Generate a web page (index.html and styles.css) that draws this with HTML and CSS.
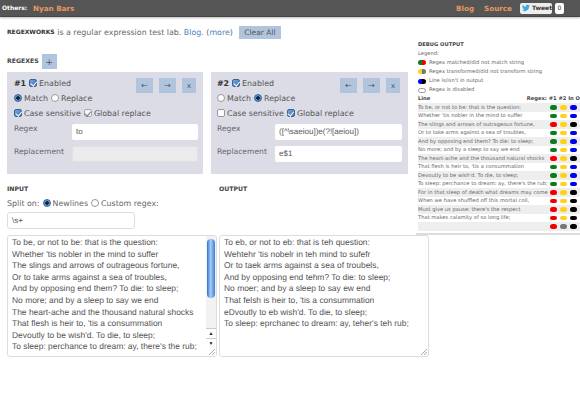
FILE: index.html
```html
<!DOCTYPE html>
<html lang="en">
<head>
  <meta charset="UTF-8">
  <title>Regexworks</title>
  <link rel="stylesheet" href="styles.css">
</head>
<body>
  <header class="topbar">
    <span class="others">Others:</span>
    <a class="toplink nyan">Nyan Bars</a>
    <span class="spacer"></span>
    <a class="toplink">Blog</a>
    <a class="toplink source">Source</a>
    <span class="tweet">
      <svg width="10" height="8" viewBox="0 0 24 20"><path fill="#3fa9e0" d="M24 2.4a10 10 0 0 1-2.8.8A5 5 0 0 0 23.3.5a10 10 0 0 1-3.100 1.200 4.900 4.900 0 0 0-8.400 4.500A14 14 0 0 1 1.700.9a4.900 4.900 0 0 0 1.500 6.600 5 5 0 0 1-2.200-.6 4.900 4.900 0 0 0 3.900 4.900 5 5 0 0 1-2.200.1 4.900 4.900 0 0 0 4.600 3.400A9.900 9.900 0 0 1 0 17.400 14 14 0 0 0 21.500 5q1.500-1.100 2.500-2.600z"/></svg>
      Tweet
    </span>
    <span class="count">0</span>
  </header>

  <div class="main">
    <div class="left">
      <p class="intro"><b class="brand">REGEXWORKS</b> is a regular expression test lab. <a>Blog.</a> (<a>more</a>)<button class="btn clear">Clear All</button></p>
      <div class="regex-head"><h3>REGEXES</h3><button class="btn add">+</button></div>

      <div class="panels">
        <section class="panel">
          <div class="panel-top">
            <div>
              <div class="row"><b>#1</b><i class="check on"></i>Enabled</div>
              <div class="row"><i class="radio on"></i>Match<i class="radio"></i>Replace</div>
            </div>
            <div class="tools"><button class="btn move">←</button><button class="btn move">→</button><button class="btn del">x</button></div>
          </div>
          <div class="row"><i class="check on"></i>Case sensitive<i class="check plain"></i>Global replace</div>
          <div class="field"><label>Regex</label><div class="input">to</div></div>
          <div class="field"><label>Replacement</label><div class="input disabled"></div></div>
        </section>
        <section class="panel">
          <div class="panel-top">
            <div>
              <div class="row"><b>#2</b><i class="check on"></i>Enabled</div>
              <div class="row"><i class="radio"></i>Match<i class="radio on"></i>Replace</div>
            </div>
            <div class="tools"><button class="btn move">←</button><button class="btn move">→</button><button class="btn del">x</button></div>
          </div>
          <div class="row"><i class="check"></i>Case sensitive<i class="check on"></i>Global replace</div>
          <div class="field"><label>Regex</label><div class="input">([^\saeiou])e(?![aeiou])</div></div>
          <div class="field"><label>Replacement</label><div class="input">e$1</div></div>
        </section>
      </div>

      <div class="io">
        <div class="io-in">
          <h3>INPUT</h3>
          <div class="split">Split on:<i class="radio on"></i>Newlines<i class="radio"></i>Custom regex:</div>
          <div class="input split-input">\s+</div>
        </div>
        <div><h3>OUTPUT</h3></div>
      </div>
    </div>

    <aside class="debug">
      <h4>DEBUG OUTPUT</h4>
      <div class="legend">Legend:</div>
      <div class="legend"><span class="duo"><i class="g"></i><i class="r"></i></span>Regex matched/did not match string</div>
      <div class="legend"><span class="duo"><i class="y"></i><i class="d"></i></span>Regex transformed/did not transform string</div>
      <div class="legend"><span class="duo"><i class="b"></i><i class="k"></i></span>Line is/isn't in output</div>
      <div class="legend"><span class="duo off"></span>Regex is disabled</div>
      <div class="dhead"><b>Line</b><b class="dcols">Regex: #1 #2 In O</b></div>
      <div class="drow"><span>To be, or not to be: that is the question:</span><i class="g"></i><i class="y"></i><i class="b"></i></div>
      <div class="drow"><span>Whether 'tis nobler in the mind to suffer</span><i class="g"></i><i class="y"></i><i class="b"></i></div>
      <div class="drow"><span>The slings and arrows of outrageous fortune,</span><i class="r"></i><i class="y"></i><i class="k"></i></div>
      <div class="drow"><span>Or to take arms against a sea of troubles,</span><i class="g"></i><i class="y"></i><i class="b"></i></div>
      <div class="drow"><span>And by opposing end them? To die: to sleep;</span><i class="g"></i><i class="y"></i><i class="b"></i></div>
      <div class="drow"><span>No more; and by a sleep to say we end</span><i class="g"></i><i class="y"></i><i class="b"></i></div>
      <div class="drow"><span>The heart-ache and the thousand natural shocks</span><i class="r"></i><i class="y"></i><i class="k"></i></div>
      <div class="drow"><span>That flesh is heir to, 'tis a consummation</span><i class="g"></i><i class="y"></i><i class="b"></i></div>
      <div class="drow"><span>Devoutly to be wish'd. To die, to sleep;</span><i class="g"></i><i class="y"></i><i class="b"></i></div>
      <div class="drow"><span>To sleep: perchance to dream: ay, there's the rub;</span><i class="g"></i><i class="y"></i><i class="b"></i></div>
      <div class="drow"><span>For in that sleep of death what dreams may come</span><i class="r"></i><i class="y"></i><i class="k"></i></div>
      <div class="drow"><span>When we have shuffled off this mortal coil,</span><i class="r"></i><i class="y"></i><i class="k"></i></div>
      <div class="drow"><span>Must give us pause: there's the respect</span><i class="r"></i><i class="y"></i><i class="k"></i></div>
      <div class="drow"><span>That makes calamity of so long life;</span><i class="r"></i><i class="y"></i><i class="k"></i></div>
      <div class="drow"><span></span><i class="r"></i><i class="d"></i><i class="k"></i></div>
    </aside>
  </div>

  <div class="texts">
    <div class="textbox">
      <div class="lines">To be, or not to be: that is the question:
Whether 'tis nobler in the mind to suffer
The slings and arrows of outrageous fortune,
Or to take arms against a sea of troubles,
And by opposing end them? To die: to sleep;
No more; and by a sleep to say we end
The heart-ache and the thousand natural shocks
That flesh is heir to, 'tis a consummation
Devoutly to be wish'd. To die, to sleep;
To sleep: perchance to dream: ay, there's the rub;</div>
      <div class="scrollbar">
        <div class="track"><div class="thumb"></div></div>
        <div class="arrow">▲</div>
        <div class="arrow">▼</div>
        <div class="corner"></div>
      </div>
      <svg class="grip" width="6" height="6" viewBox="0 0 6 6"><path d="M0 6L6 0M3 6L6 3" stroke="#aaa" stroke-width="1"/></svg>
    </div>
    <div class="textbox output">
      <div class="lines">To eb, or not to eb: that is teh question:
Wehtehr 'tis nobelr in teh mind to sufefr
Or to taek arms against a sea of troubels,
And by opposing end tehm? To die: to sleep;
No moer; and by a sleep to say ew end
That felsh is heir to, 'tis a consummation
eDvoutly to eb wish'd. To die, to sleep;
To sleep: eprchanec to dream: ay, teher's teh rub;</div>
      <svg class="grip" width="6" height="6" viewBox="0 0 6 6"><path d="M0 6L6 0M3 6L6 3" stroke="#aaa" stroke-width="1"/></svg>
    </div>
  </div>
</body>
</html>
```
FILE: styles.css
```css
* {
  box-sizing: border-box;
}
html, body {
  height: 400px;
  overflow: hidden;
}
body {
  margin: 0;
  font-family: "DejaVu Sans", sans-serif;
  font-size: 7.9px;
  color: #666;
  background: #fff;
  text-rendering: geometricPrecision;
}
i {
  font-style: normal;
}
a {
  color: #4a7fc0;
}
h3 {
  margin: 0;
  font-size: 6.2px;
  line-height: 8px;
  font-weight: bold;
  color: #444;
}

/* top bar */
.topbar {
  display: flex;
  align-items: center;
  height: 17px;
  padding: 0 16px 0 2px;
  background: #555;
  border-bottom: 1px solid #444;
  box-shadow: 0 1px 2px #bbb;
}
.others {
  width: 31px;
  font-size: 6px;
  font-weight: bold;
  color: #fff;
}
.toplink {
  font-size: 7.2px;
  font-weight: bold;
  color: #e8965f;
}
.spacer {
  flex: 1;
}
.source {
  margin: 0 8px 0 10px;
}
.tweet {
  display: flex;
  align-items: center;
  gap: 2px;
  height: 11px;
  width: 32px;
  padding-left: 2px;
  font-size: 6px;
  font-weight: bold;
  color: #333;
  background: #eee;
  border-radius: 2px;
}
.count {
  width: 9px;
  height: 11px;
  margin-left: 3px;
  text-align: center;
  font-size: 6px;
  line-height: 11px;
  color: #333;
  background: #fff;
  border-radius: 2px;
}

/* buttons */
.btn {
  padding: 0;
  border: 0;
  font-family: inherit;
  color: #555;
  background: #b0c4de;
}
.clear {
  width: 42px;
  height: 13px;
  margin-left: 6px;
  font-size: 7.5px;
}
.add {
  width: 15px;
  height: 15px;
  margin-left: 3px;
  font-size: 9px;
}
.move {
  width: 17px;
  height: 15px;
  margin-right: 6px;
  font-size: 8px;
}
.del {
  width: 14px;
  height: 15px;
  font-size: 7px;
}

/* left column */
.main {
  display: flex;
  height: 218px;
}
.left {
  flex: none;
  width: 416px;
  padding: 9px 0 0 7px;
}
.intro {
  display: flex;
  align-items: center;
  white-space: pre;
  margin: 0;
  height: 13px;
}
.brand {
  font-size: 6px;
  color: #333;
}
.regex-head {
  display: flex;
  align-items: center;
  margin-top: 15px;
}
.panels {
  display: flex;
  gap: 8px;
  margin-top: 3px;
}
.panel {
  width: 196px;
  height: 102px;
  padding: 3.5px 5px 0 7px;
  background: #dcdce6;
  font-size: 7.9px;
  color: #555;
}
.panel:last-child {
  width: 197px;
  padding: 3.5px 6px 0 6px;
}
.panel-top {
  display: flex;
  justify-content: space-between;
}
.tools {
  display: flex;
  margin: 2.5px 2px 0 0;
}
.row {
  display: flex;
  align-items: center;
  height: 15px;
  white-space: nowrap;
}
.row b {
  color: #333;
  margin-right: 2px;
}
.field {
  display: flex;
  align-items: center;
  height: 23px;
  margin-top: -0.5px;
}
.field label {
  flex: none;
  width: 58px;
  color: #666;
  font-size: 7.6px;
  margin-top: -6px;
}
.input {
  height: 16px;
  padding: 0 4px;
  border-radius: 2px;
  background: #fff;
  font-family: "Liberation Sans", sans-serif;
  font-size: 8px;
  line-height: 16px;
  color: #555;
}
.panel .input {
  flex: 1;
}
.input.disabled {
  background: #ebebeb;
  border: 1px solid #e0e0e0;
}

/* checks and radios */
.check, .radio {
  display: inline-block;
  flex: none;
  width: 8px;
  height: 8px;
  margin-right: 2px;
  background: #fff;
  border: 1px solid #999;
}
.check {
  position: relative;
  border-radius: 2px;
}
.radio {
  border-radius: 50%;
}
.check.on {
  background: linear-gradient(135deg, #7aa7e0, #3b6fb5);
  border-color: #3b6290;
}
.check.on::after, .check.plain::after {
  content: "";
  position: absolute;
  left: 1.5px;
  top: 0;
  width: 2.5px;
  height: 4.5px;
  border: solid #fff;
  border-width: 0 1px 1px 0;
  transform: rotate(40deg);
}
.check.plain {
  background: #f4f4f4;
  border-color: #aaa;
}
.check.plain::after {
  border-color: #777;
}
.radio.on {
  background: radial-gradient(circle, #123 0 1.5px, #5b93dc 2px);
  border-color: #3b6290;
}
.row b + .check {
  margin-left: 1px;
}
.row .check ~ .check, .row .radio ~ .radio, .split .radio {
  margin-left: 3px;
}

/* debug panel */
.debug {
  flex: 1;
  min-width: 0;
  padding: 25px 0 0 2px;
  font-size: 5.2px;
  color: #666;
  border-bottom: 2px solid #ddd;
  overflow: hidden;
}
.debug h4 {
  margin: 0;
  height: 7px;
  line-height: 7px;
  font-size: 5.2px;
  color: #444;
}
.legend {
  display: flex;
  align-items: center;
  height: 9.2px;
}
.duo {
  display: flex;
  flex: none;
  width: 8px;
  height: 5px;
  margin-right: 3px;
  border-radius: 2.5px;
  overflow: hidden;
}
.duo i {
  flex: 1;
}
.duo.off {
  border: 1px solid #999;
}
.dhead {
  display: flex;
  justify-content: space-between;
  white-space: nowrap;
  height: 8.5px;
  line-height: 8.5px;
  color: #444;
}
.dcols {
  flex: none;
  font-size: 5.2px;
}
.drow {
  display: flex;
  align-items: center;
  gap: 3px;
  height: 8.5px;
  padding-right: 3px;
  white-space: nowrap;
}
.drow:nth-of-type(odd) {
  background: #eee;
}
.drow span {
  flex: 1;
  min-width: 0;
}
.drow i {
  flex: none;
  width: 7px;
  height: 4.5px;
  border-radius: 2.5px;
}
.g { background: #0a7d1a; }
.r { background: #f00000; }
.y { background: #ffd21a; }
.b { background: #0000f0; }
.k { background: #000; }
.d { background: #777; }

/* input and output */
.io {
  display: flex;
  padding-top: 12px;
}
.io-in {
  width: 212px;
}
.split {
  display: flex;
  align-items: center;
  height: 14px;
  margin-top: 2px;
  white-space: pre;
}
.split-input {
  width: 128px;
  height: 17px;
  margin-top: 2px;
  border: 1px solid #ddd;
  border-radius: 3px;
}
.texts {
  display: flex;
  gap: 2px;
  margin-left: 7px;
}
.textbox {
  position: relative;
  display: flex;
  width: 210px;
  height: 122px;
  overflow: hidden;
  background: #fff;
  border: 1px solid #ddd;
  border-radius: 3px;
  font-family: "Liberation Sans", sans-serif;
  font-size: 8.45px;
  line-height: 11.6px;
  color: #555;
}
.lines {
  flex: 1;
  min-width: 0;
  padding: 1px 0 0 4px;
  white-space: pre;
  overflow: hidden;
}
.scrollbar {
  display: flex;
  flex-direction: column;
  width: 10px;
  background: #eee;
}
.track {
  flex: 1;
  padding: 3px 1px 0;
  background: #f2f2f2;
}
.thumb {
  height: 59px;
  border-radius: 4px;
  background: linear-gradient(90deg, #2d6fd6, #a9cdf5 45%, #3a7fdc);
}
.arrow {
  height: 10px;
  text-align: center;
  font-size: 5px;
  line-height: 10px;
  color: #222;
  background: #fff;
  border-top: 1px solid #ccc;
}
.corner {
  height: 8px;
  background: #fff;
}
.grip {
  position: absolute;
  right: 1px;
  bottom: 1px;
}
```
